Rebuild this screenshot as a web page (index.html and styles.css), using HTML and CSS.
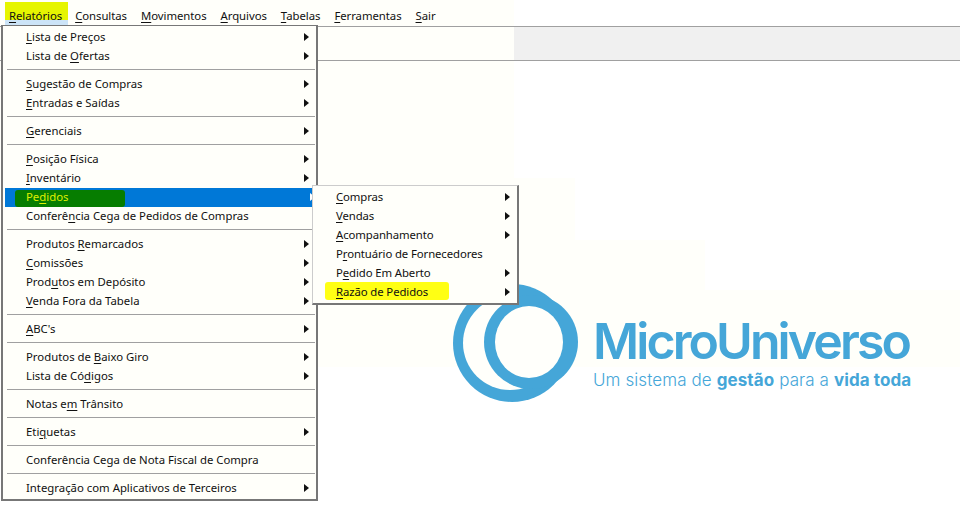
FILE: index.html
```html
<!DOCTYPE html>
<html lang="pt">
<head>
<meta charset="utf-8">
<title>MicroUniverso</title>
<link rel="stylesheet" href="styles.css">
</head>
<body>
<div class="tint tint-a"></div>
<div class="tint tint-b"></div>
<div class="tint tint-c"></div>
<div class="tint tint-d"></div>
<nav class="menubar">
  <span class="top active"><u>R</u>elatórios</span>
  <span class="top"><u>C</u>onsultas</span>
  <span class="top"><u>M</u>ovimentos</span>
  <span class="top"><u>A</u>rquivos</span>
  <span class="top"><u>T</u>abelas</span>
  <span class="top"><u>F</u>erramentas</span>
  <span class="top"><u>S</u>air</span>
</nav>
<div class="toolbar"><div class="toolbar-fill"></div></div>
<main class="workspace">
  <div class="logo">
    <svg class="logo-mark" viewBox="0 0 126 120" width="126" height="120" aria-hidden="true">
      <circle cx="59" cy="60" r="59" fill="#45a6d8"/>
      <circle cx="57" cy="60" r="47" fill="#fffffb"/>
      <circle cx="78" cy="59" r="47" fill="#45a6d8"/>
      <ellipse cx="76" cy="59" rx="34" ry="36" fill="#fffffb"/>
    </svg>
    <div class="logo-text">
      <div class="logo-name">MicroUniverso</div>
      <div class="logo-tag">Um sistema de <b>gestão</b> para a <b>vida toda</b></div>
    </div>
  </div>
</main>

<div class="menu main-menu">
  <div class="item sub"><span><u>L</u>ista de Preços</span></div>
  <div class="item sub"><span>Lista de <u>O</u>fertas</span></div>
  <div class="sep"></div>
  <div class="item sub"><span><u>S</u>ugestão de Compras</span></div>
  <div class="item sub"><span><u>E</u>ntradas e Saídas</span></div>
  <div class="sep"></div>
  <div class="item sub"><span><u>G</u>erenciais</span></div>
  <div class="sep"></div>
  <div class="item sub"><span><u>P</u>osição Física</span></div>
  <div class="item sub"><span><u>I</u>nventário</span></div>
  <div class="item sub selected"><i class="green-mark"></i><span>Pe<u>d</u>idos</span></div>
  <div class="item"><span>Conferê<u>n</u>cia Cega de Pedidos de Compras</span></div>
  <div class="sep"></div>
  <div class="item sub"><span>Produtos <u>R</u>emarcados</span></div>
  <div class="item sub"><span><u>C</u>omissões</span></div>
  <div class="item sub"><span>Prod<u>u</u>tos em Depósito</span></div>
  <div class="item sub"><span><u>V</u>enda Fora da Tabela</span></div>
  <div class="sep"></div>
  <div class="item sub"><span><u>A</u>BC's</span></div>
  <div class="sep"></div>
  <div class="item sub"><span>Produtos de <u>B</u>aixo Giro</span></div>
  <div class="item sub"><span>Lista de Có<u>d</u>igos</span></div>
  <div class="sep"></div>
  <div class="item"><span>Notas e<u>m</u> Trânsito</span></div>
  <div class="sep"></div>
  <div class="item sub"><span>Eti<u>q</u>uetas</span></div>
  <div class="sep"></div>
  <div class="item"><span>Conferência Cega de Nota Fiscal de Compra</span></div>
  <div class="sep"></div>
  <div class="item sub"><span>Integração com Aplicativos de Terceiros</span></div>
</div>

<div class="menu sub-menu">
  <div class="item sub"><span><u>C</u>ompras</span></div>
  <div class="item sub"><span><u>V</u>endas</span></div>
  <div class="item sub"><span><u>A</u>companhamento</span></div>
  <div class="item"><span>P<u>r</u>ontuário de Fornecedores</span></div>
  <div class="item sub"><span>P<u>e</u>dido Em Aberto</span></div>
  <div class="item sub"><i class="yellow-mark"></i><span><u>R</u>azão de Pedidos</span></div>
</div>
</body>
</html>
```
FILE: styles.css
```css
* { box-sizing: border-box; }
html, body { margin: 0; height: 100%; }
body {
  width: 960px;
  height: 511px;
  overflow: hidden;
  position: relative;
  background: #fff;
  color: #111;
  font: 11.35px/19px "Noto Sans", "DejaVu Sans", sans-serif;
  display: flex;
  flex-direction: column;
}
u { text-decoration-thickness: 1px; text-underline-offset: 2px; }

.tint { position: absolute; left: 0; background: #fffffa; }
.tint-a { top: 0; width: 514px; height: 178px; }
.tint-b { top: 178px; width: 575px; height: 62px; }
.tint-c { top: 240px; width: 705px; height: 50px; }
.tint-d { top: 290px; width: 960px; height: 77px; }

.menubar {
  position: relative;
  display: flex;
  height: 27px;
  padding: 4px 0 0 5px;
  border-bottom: 1px solid #a0a0a0;
  letter-spacing: -0.05px;
}
.top {
  height: 21px;
  padding: 2px 7px 0;
  white-space: nowrap;
}
.top.active {
  padding: 2px 6px 0 4px;
  background: linear-gradient(#e6f500 0 78%, #cce4f7 78%);
  box-shadow: 0 -2px 0 #e6f500;
}

.toolbar {
  position: relative;
  height: 34px;
  border-bottom: 1px solid #a0a0a0;
  display: flex;
  justify-content: flex-end;
}
.toolbar-fill { width: 446px; background: #f0f0f0; }

.workspace { position: relative; flex: 1; padding: 222px 0 0 453px; }
.logo { display: flex; gap: 15px; }
.logo-mark { display: block; flex: none; }
.logo-text { color: #45a6d8; padding-top: 33px; }
.logo-name { font: 600 50px/50px "Inter", sans-serif; letter-spacing: -2.9px; white-space: nowrap; margin-left: -1px; }
.logo-tag { font: 300 17px/22px "Inter", sans-serif; letter-spacing: 0.1px; margin: 3px 0 0 -1px; white-space: nowrap; }
.logo-tag b { font-weight: 700; }

.menu {
  position: absolute;
  background: #fffffa;
}
.main-menu {
  left: 1px; top: 25px; width: 317px; height: 476px;
  border-style: solid;
  border-width: 1px 2px 2px 2px;
  border-color: #777;
  padding: 2px 0 0 2px;
}
.sub-menu {
  left: 312px; top: 185px; width: 207px; height: 120px;
  border-style: solid;
  border-color: #ccc #777 #777 #ccc;
  border-width: 1px 2px 2px 1px;
  padding: 2px 0 0 1px;
}
.item {
  position: relative;
  height: 19px;
  padding-left: 21px;
  white-space: nowrap;
}
.item span { position: relative; top: -1px; }
.sub-menu .item { padding-left: 22px; letter-spacing: -0.1px; }
.sub::after {
  content: "";
  position: absolute;
  right: 7px;
  top: 5px;
  border-left: 5px solid #111;
  border-top: 4px solid transparent;
  border-bottom: 4px solid transparent;
}
.selected { background: #0078d7; color: #dff000; margin-right: -6px; }
.selected::after { border-left-color: #fff; right: 7px; }
.green-mark { position: absolute; left: 10px; top: 2px; width: 110px; height: 17px; background: #067d00; border-radius: 3px; }
.yellow-mark { position: absolute; left: 11px; top: -1px; width: 124px; height: 18px; background: #ffff14; border-radius: 3px; }
.sep { height: 9px; padding-top: 3px; margin: 0 1px 0 2px; }
.sep::before { content: ""; display: block; height: 1px; background: #a0a0a0; }
```
